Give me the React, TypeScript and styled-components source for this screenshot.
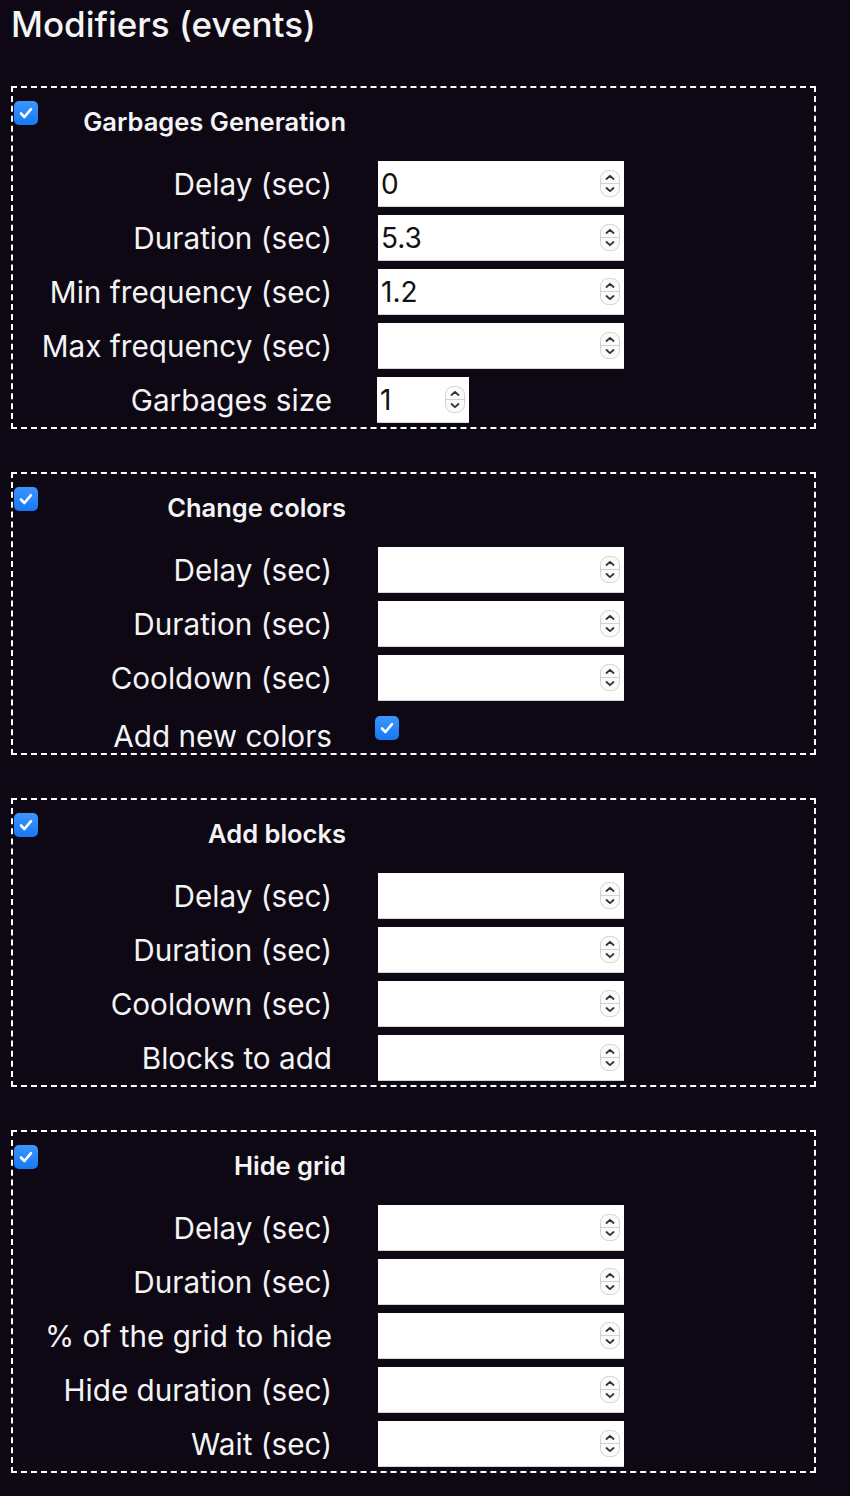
import React from 'react'
import styled, { createGlobalStyle } from 'styled-components'

const GlobalStyle = createGlobalStyle`
  html, body {
    margin: 0;
    padding: 0;
    background: #0d0814;
  }
  body {
    font-family: Inter, "Noto Sans", sans-serif;
    color: #f4f4f4;
  }
`

const Page = styled.div`
  width: 850px;
  min-height: 1496px;
  padding: 0 0 0 11px;
  box-sizing: border-box;
`

const Title = styled.h1`
  margin: 0 0 38px;
  font-size: 35px;
  line-height: 48px;
  font-weight: 500;
`

const Fieldset = styled.section`
  width: 805px;
  box-sizing: border-box;
  border: 2px dashed #ffffff;
  margin-bottom: 43px;
`

const Header = styled.div`
  display: flex;
  justify-content: space-between;
  align-items: flex-start;
  width: 333px;
  height: 69px;
`

const SectionName = styled.div`
  margin-top: 22px;
  font-size: 25.5px;
  line-height: 24px;
  font-weight: 600;
`

const Row = styled.div<{ $tall?: boolean }>`
  display: grid;
  grid-template-columns: 319px auto;
  column-gap: 46px;
  align-items: ${p => (p.$tall ? 'start' : 'center')};
  height: ${p => (p.$tall ? '48px' : '54px')};
`

const Label = styled.label<{ $low?: boolean }>`
  text-align: right;
  font-size: 29.7px;
  line-height: 36px;
  margin-top: ${p => (p.$low ? '13px' : '0')};
`

const Field = styled.div<{ $narrow?: boolean }>`
  display: flex;
  align-items: center;
  width: ${p => (p.$narrow ? '92px' : '246px')};
  height: 46px;
  box-sizing: border-box;
  background: #ffffff;
  border-bottom: 1px solid #d6d6d6;
  padding: 0 3px 0 3px;
  margin-left: ${p => (p.$narrow ? '-1px' : '0')};
`

const Value = styled.input`
  flex: 1;
  min-width: 0;
  border: none;
  outline: none;
  background: transparent;
  padding: 0;
  font-family: Inter, "Noto Sans", sans-serif;
  font-size: 28px;
  color: #111;
`

const Spinner = styled.svg`
  flex: none;
  margin-right: 1px;
`

const Box = styled.span<{ $offset?: boolean }>`
  display: inline-flex;
  align-items: center;
  justify-content: center;
  width: 24px;
  height: 24px;
  border-radius: 5px;
  background: linear-gradient(#3b96ff, #1678f5);
  margin-top: ${p => (p.$offset ? '11px' : '13px')};
  margin-left: ${p => (p.$offset ? '-3px' : '1px')};
`

const Check = ({ offset }: { offset?: boolean }) => (
  <Box $offset={offset}>
    <svg width="16" height="16" viewBox="0 0 16 16">
      <path d="M3 8.5 L6.4 12 L13 4.2" fill="none" stroke="#fff" strokeWidth="2.6" strokeLinecap="round" strokeLinejoin="round" />
    </svg>
  </Box>
)

const NumberInput = ({ value, narrow }: { value?: string; narrow?: boolean }) => (
  <Field $narrow={narrow}>
    <Value type="text" defaultValue={value ?? ''} />
    <Spinner width="20" height="27" viewBox="0 0 20 27">
      <rect x="0.5" y="0.5" width="19" height="26" rx="8" fill="#fbfbfb" stroke="#d2d2d2" />
      <line x1="1" y1="13.5" x2="19" y2="13.5" stroke="#d2d2d2" />
      <path d="M6.5 9 L10 5.8 L13.5 9" fill="none" stroke="#333" strokeWidth="1.8" strokeLinecap="round" strokeLinejoin="round" />
      <path d="M6.5 18 L10 21.2 L13.5 18" fill="none" stroke="#333" strokeWidth="1.8" strokeLinecap="round" strokeLinejoin="round" />
    </Spinner>
  </Field>
)

type Entry = { label: string; value?: string; narrow?: boolean; check?: boolean }

const sections: { name: string; rows: Entry[] }[] = [
  {
    name: 'Garbages Generation',
    rows: [
      { label: 'Delay (sec)', value: '0' },
      { label: 'Duration (sec)', value: '5.3' },
      { label: 'Min frequency (sec)', value: '1.2' },
      { label: 'Max frequency (sec)' },
      { label: 'Garbages size', value: '1', narrow: true },
    ],
  },
  {
    name: 'Change colors',
    rows: [
      { label: 'Delay (sec)' },
      { label: 'Duration (sec)' },
      { label: 'Cooldown (sec)' },
      { label: 'Add new colors', check: true },
    ],
  },
  {
    name: 'Add blocks',
    rows: [
      { label: 'Delay (sec)' },
      { label: 'Duration (sec)' },
      { label: 'Cooldown (sec)' },
      { label: 'Blocks to add' },
    ],
  },
  {
    name: 'Hide grid',
    rows: [
      { label: 'Delay (sec)' },
      { label: 'Duration (sec)' },
      { label: '% of the grid to hide' },
      { label: 'Hide duration (sec)' },
      { label: 'Wait (sec)' },
    ],
  },
]

export default function App() {
  return (
    <Page>
      <GlobalStyle />
      <Title>Modifiers (events)</Title>
      {sections.map(s => (
        <Fieldset key={s.name}>
          <Header>
            <Check />
            <SectionName>{s.name}</SectionName>
          </Header>
          {s.rows.map(r => (
            <Row key={r.label} $tall={r.check}>
              <Label $low={r.check}>{r.label}</Label>
              {r.check ? <Check offset /> : <NumberInput value={r.value} narrow={r.narrow} />}
            </Row>
          ))}
        </Fieldset>
      ))}
    </Page>
  )
}
